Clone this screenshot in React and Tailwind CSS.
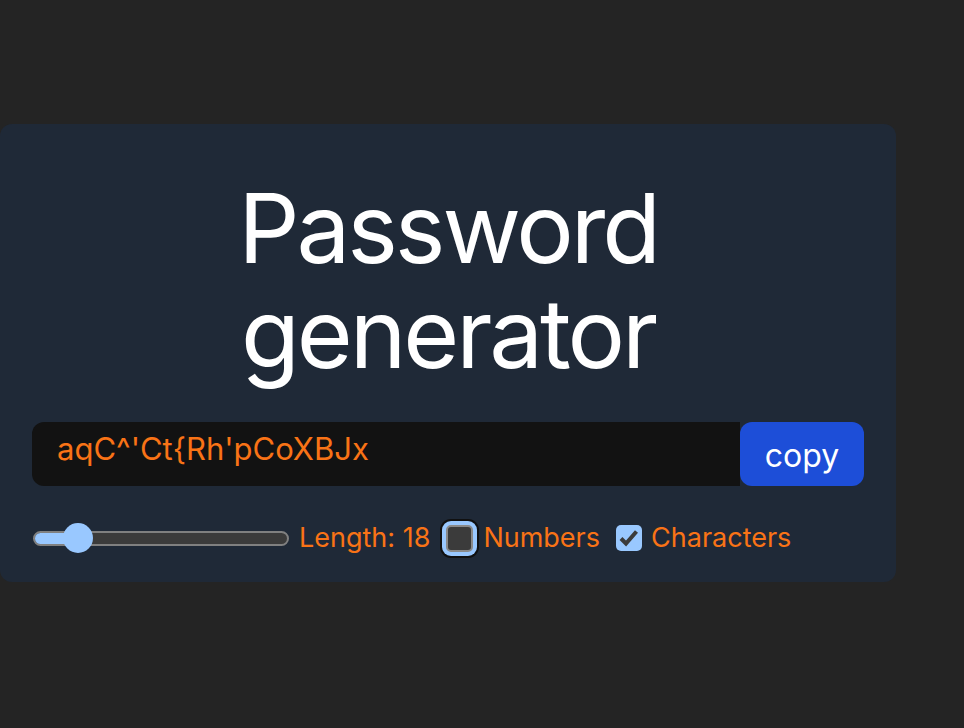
import React from 'react';

const font = { fontFamily: 'Inter, "Noto Sans", sans-serif' };

const Slider = () => {
  return (
    <div className="relative w-[256px] h-[30px] flex items-center">
      <div className="w-full h-[15px] rounded-full border-2 border-[#808080] bg-[#3b3b3b] overflow-hidden">
        <div className="h-full w-[45px] bg-[#99c8ff]" />
      </div>
      <div className="absolute left-[30px] top-0 w-[30px] h-[30px] rounded-full bg-[#99c8ff]" />
    </div>
  );
};

const Checkbox = ({ checked, focused }) => {
  if (checked) {
    return (
      <span className="w-[26px] h-[26px] rounded-[5px] bg-[#99c8ff] flex items-center justify-center shrink-0">
        <svg width="26" height="26" viewBox="0 0 26 26">
          <polyline points="5,13.5 10,18.5 20.5,6.5" fill="none" stroke="#3b3b3b" strokeWidth="4" />
        </svg>
      </span>
    );
  }
  return (
    <span
      className={
        'w-[27px] h-[27px] rounded-[5px] border-2 border-[#8a8a8a] bg-[#3b3b3b] shrink-0 ' +
        (focused ? 'shadow-[0_0_0_4px_#99c8ff,0_0_0_6px_#101010]' : '')
      }
    />
  );
};

export default function App() {
  return (
    <div className="min-h-screen bg-[#242424]" style={font}>
      <div className="h-[124px]" />
      <div className="w-[896px] rounded-xl bg-[#1f2937] px-8 pt-[52px] pb-6">
        <h1 className="text-center text-white text-[96px] leading-[105px] tracking-[-0.032em] font-normal">
          Password
          <br />
          generator
        </h1>

        <div className="flex h-16 mt-[36px]">
          <div className="flex-1 flex items-center bg-[#121212] rounded-l-xl pl-[25px] pb-[9px] text-[31px] text-[#f97316]">
            aqC^'Ct{'{'}Rh'pCoXBJx
          </div>
          <button className="w-[124px] h-16 rounded-xl bg-[#1d4ed8] text-white text-[32px] flex items-center justify-center pt-1">
            copy
          </button>
        </div>

        <div className="flex items-center h-10 mt-8 pl-px text-[27px] text-[#f97316]">
          <Slider />
          <span className="ml-[10px]">Length: 18</span>
          <span className="ml-4 flex">
            <Checkbox focused />
          </span>
          <span className="ml-[10px]">Numbers</span>
          <span className="ml-4 flex">
            <Checkbox checked />
          </span>
          <span className="ml-[9px]">Characters</span>
        </div>
      </div>
    </div>
  );
}
